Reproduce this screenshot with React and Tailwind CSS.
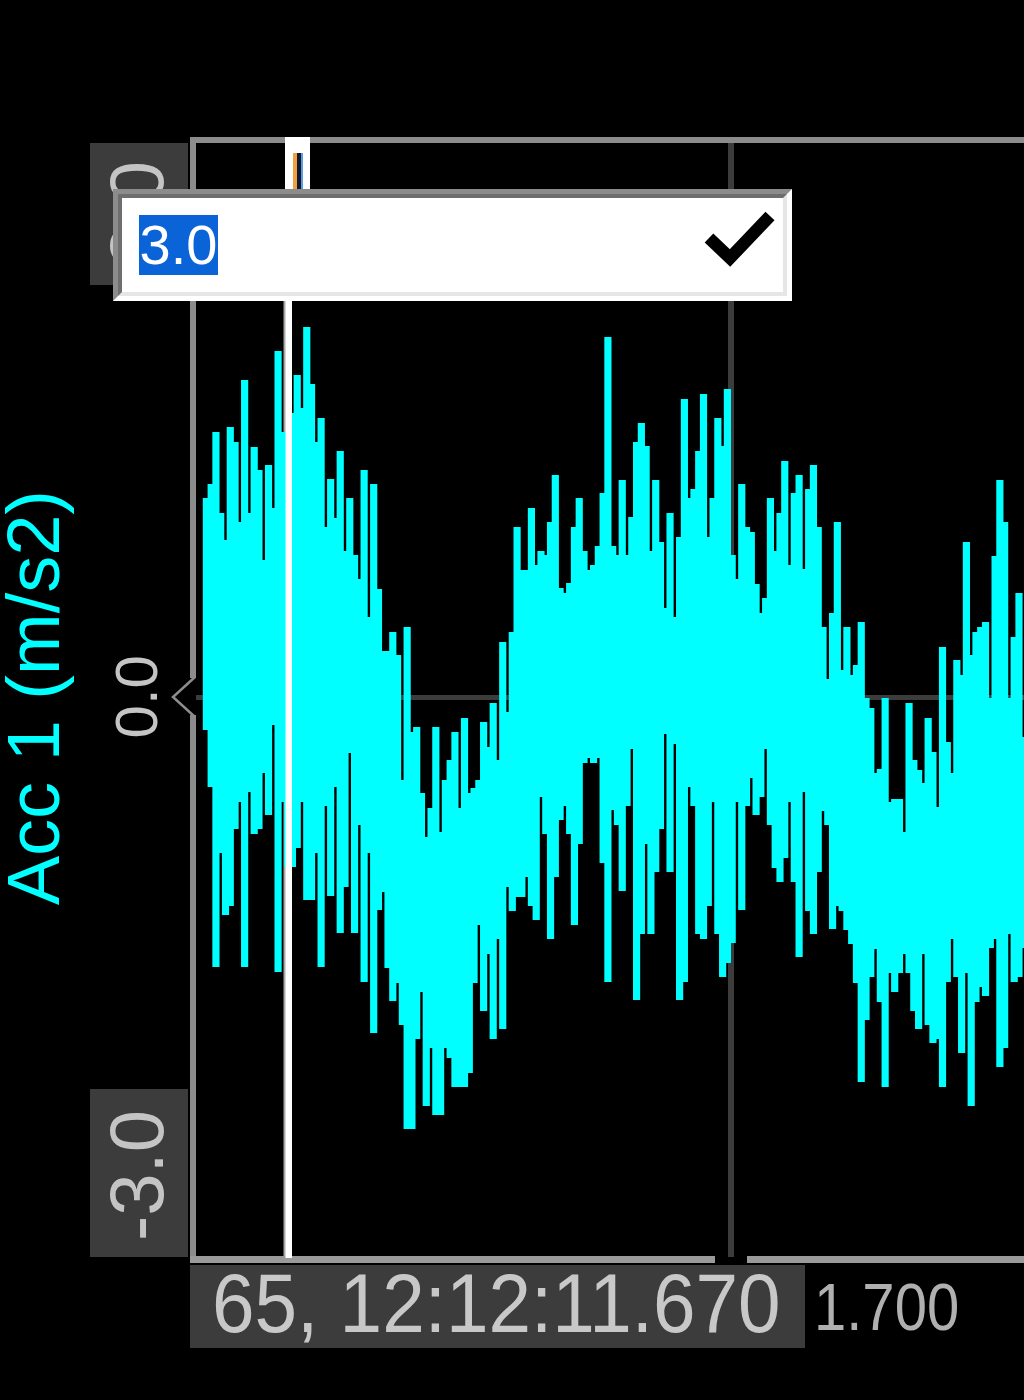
import React from "react";

const tops = [
  498, 484, 432, 513, 540, 427, 442, 522, 380, 513,
  447, 470, 560, 465, 508, 351, 432, 432, 413, 375,
  408, 327, 384, 442, 418, 527, 479, 518, 451, 551,
  498, 555, 579, 470, 617, 484, 589, 651, 651, 632,
  655, 780, 627, 732, 727, 793, 837, 808, 727, 832,
  780, 760, 732, 808, 718, 793, 788, 780, 722, 747,
  703, 760, 642, 712, 632, 527, 570, 570, 508, 565,
  551, 555, 522, 475, 588, 593, 583, 527, 498, 551,
  570, 565, 546, 493, 337, 546, 555, 480, 555, 517,
  442, 423, 446, 551, 480, 542, 608, 513, 617, 537,
  399, 498, 489, 451, 394, 537, 498, 418, 446, 389,
  555, 579, 484, 527, 532, 584, 613, 598, 498, 551,
  513, 461, 565, 493, 475, 569, 489, 465, 527, 627,
  679, 613, 522, 670, 627, 675, 665, 622, 698, 708,
  773, 769, 698, 802, 799, 799, 832, 703, 760, 770,
  783, 718, 752, 807, 647, 742, 773, 660, 675, 542,
  655, 632, 627, 622, 698, 556, 480, 522, 698, 637,
  593, 737,
];

const bottoms = [
  730, 787, 967, 853, 915, 906, 829, 802, 967, 792,
  834, 829, 773, 815, 725, 972, 802, 867, 867, 848,
  802, 900, 900, 853, 967, 806, 896, 787, 933, 887,
  753, 933, 825, 982, 853, 1033, 910, 892, 968, 1001,
  983, 1025, 1129, 1129, 1039, 992, 1106, 1048, 1115, 1115,
  1048, 1058, 1087, 1087, 1087, 1073, 983, 925, 1011, 954,
  1039, 939, 1029, 887, 911, 897, 897, 877, 906, 920,
  797, 834, 939, 877, 820, 806, 834, 925, 844, 763,
  758, 763, 758, 863, 982, 810, 825, 891, 806, 749,
  1000, 934, 844, 934, 872, 829, 734, 872, 744, 1000,
  982, 787, 806, 934, 939, 906, 802, 934, 977, 963,
  943, 802, 910, 806, 778, 815, 797, 749, 825, 868,
  882, 858, 802, 882, 957, 792, 911, 934, 872, 811,
  825, 929, 906, 911, 930, 944, 983, 1082, 1020, 977,
  949, 1002, 1087, 973, 992, 973, 954, 973, 1011, 1029,
  954, 1025, 1043, 1039, 1087, 982, 939, 977, 1053, 973,
  1106, 1002, 987, 996, 948, 939, 1067, 1048, 934, 982,
  977, 948,
];

// one column per sample, a bit wider than the step so the dips read as thin gaps
const wavePath = tops
  .map((top, i) => {
    const x = (202.8 + 4.78 * i).toFixed(2);
    return `M${x} ${top}h7.17V${bottoms[i]}h-7.17z`;
  })
  .join("");

function Plot() {
  return (
    <svg
      viewBox="190 137 834 1126"
      className="block w-[834px] h-[1126px] shrink-0 overflow-visible"
    >
      {/* grid */}
      <rect x="728" y="143" width="6" height="1114" fill="#3c3c3c" />
      <rect x="196" y="695" width="828" height="5" fill="#3c3c3c" />
      <rect x="283.5" y="300" width="3" height="958" fill="#a8a8a8" />

      {/* frame */}
      <rect x="190" y="137" width="834" height="6" fill="#8c8c8c" />
      <rect x="190" y="137" width="6" height="541" fill="#8c8c8c" />
      <rect x="190" y="715" width="6" height="548" fill="#8c8c8c" />
      <rect x="190" y="1256" width="525" height="7" fill="#9a9a9a" />
      <rect x="747" y="1256" width="277" height="7" fill="#9a9a9a" />
      <path d="M195 677L173 697L195 717" fill="none" stroke="#8c8c8c" strokeWidth="2.5" />

      <path d={wavePath} fill="#00ffff" />

      {/* cursor */}
      <rect x="285.5" y="300" width="6.5" height="958" fill="#ffffff" />
      <rect x="285" y="137" width="25" height="54" fill="#ffffff" />
      <rect x="293" y="153" width="4" height="38" fill="#f0a040" />
      <rect x="297" y="153" width="4" height="38" fill="#101830" />
      <rect x="301" y="153" width="2" height="38" fill="#5aa0e0" />
    </svg>
  );
}

function ScaleValue({ children, className }) {
  return (
    <div className={"w-[98px] pr-[5px] flex items-center justify-center shrink-0 " + className}>
      <span className="[writing-mode:vertical-rl] rotate-180 leading-none text-[#c4c4c4]">
        {children}
      </span>
    </div>
  );
}

export default function App() {
  return (
    <div className="w-[1024px] h-[1400px] bg-black overflow-hidden">
      <div className="relative w-[1024px] h-[1400px] blur-[0.6px] font-['Liberation_Sans',Arial,sans-serif]">
        <div className="flex pt-[137px]">
          <div className="w-[90px] h-[1126px] shrink-0 pl-[4px]">
            <div className="flex justify-start h-[768px] items-end">
              <span className="[writing-mode:vertical-rl] rotate-180 text-[74px] leading-[60px] text-[#00ffff] whitespace-nowrap">
                Acc 1 (m/s2)
              </span>
            </div>
          </div>

          <div className="w-[100px] h-[1126px] shrink-0 flex flex-col">
            <ScaleValue className="h-[142px] mt-[6px] bg-[#3c3c3c] text-[76px]">3.0</ScaleValue>
            <ScaleValue className="h-[83px] mt-[370px] text-[60px]">0.0</ScaleValue>
            <ScaleValue className="h-[168px] mt-[351px] pt-[5px] bg-[#3c3c3c] text-[76px]">-3.0</ScaleValue>
          </div>

          <Plot />
        </div>

        <div className="flex items-center ml-[190px] mt-[2px]">
          <div className="w-[615px] h-[83px] bg-[#3c3c3c] pl-[22px] pb-[4px] flex items-center text-[76.5px] leading-none text-[#c8c8c8] whitespace-nowrap">
            <span className="scale-y-[1.09] origin-center">65, 12:12:11.670</span>
          </div>
          <span className="ml-[9px] text-[58px] leading-none text-[#b0b0b0] scale-y-[1.15]">1.700</span>
        </div>

        {/* inline editor over the scale */}
        <div className="absolute left-[113px] top-[189px] w-[679px] h-[112px] border-[5px] border-t-[#8c8c8c] border-l-[#8c8c8c] border-r-white border-b-white">
          <div className="w-full h-full border-[4px] border-t-[#6e6e6e] border-l-[#6e6e6e] border-r-[#e6e6e6] border-b-[#e6e6e6] bg-white flex items-center justify-between pl-[17px] pr-[2px]">
            <span className="bg-[#0a64d8] text-white text-[56px] leading-[60px] h-[60px] w-[79px] text-center">3.0</span>
            <svg viewBox="0 0 80 60" className="w-[80px] h-[60px] shrink-0 overflow-visible">
              <path d="M8 23L29 43L69 1" fill="none" stroke="#000000" strokeWidth="12.5" />
            </svg>
          </div>
        </div>
      </div>
    </div>
  );
}
